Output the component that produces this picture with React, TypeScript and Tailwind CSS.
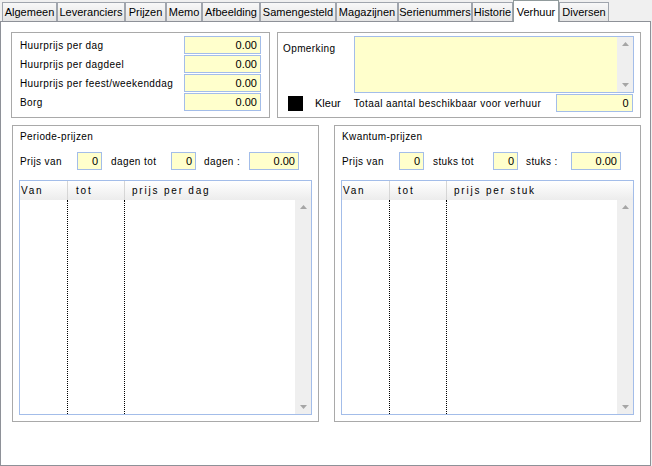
import React from "react";

const tabs = [
  { label: "Algemeen", w: "w-[55px]" },
  { label: "Leveranciers", w: "w-[68px]" },
  { label: "Prijzen", w: "w-[41px]" },
  { label: "Memo", w: "w-[36px]" },
  { label: "Afbeelding", w: "w-[58px]" },
  { label: "Samengesteld", w: "w-[76px]" },
  { label: "Magazijnen", w: "w-[62px]" },
  { label: "Serienummers", w: "w-[74px]" },
  { label: "Historie", w: "w-[41px]" },
  { label: "Verhuur", w: "w-[46px]", active: true },
  { label: "Diversen", w: "w-[50px]" },
];

function Field({ value, className }: { value: string; className: string }) {
  return (
    <div
      className={`h-[18px] border border-[#a3bde9] bg-[#ffffcc] flex items-center justify-end pr-[3px] text-[11px] leading-none tracking-normal text-black ${className}`}
    >
      {value}
    </div>
  );
}

function ScrollBar({ className }: { className: string }) {
  return (
    <div className={`w-[16px] bg-[#efefef] flex flex-col justify-between items-center py-[5px] ${className}`}>
      <svg width="7" height="4" viewBox="0 0 7 4">
        <path d="M3.5 0 L7 4 L0 4 Z" fill="#a6a6a6" />
      </svg>
      <svg width="7" height="4" viewBox="0 0 7 4">
        <path d="M0 0 L7 0 L3.5 4 Z" fill="#a6a6a6" />
      </svg>
    </div>
  );
}

function PriceGroup({
  title,
  unit,
  header,
}: {
  title: string;
  unit: string;
  header: string;
}) {
  return (
    <div className="w-[307px] h-[297px] border border-[#a9a9a9] pl-[6px] pt-[5px] flex flex-col">
      <div className="pl-[1px] leading-[12px]">{title}</div>
      <div className="mt-[9px] flex items-center h-[18px]">
        <span className="w-[58px] pl-[1px]">Prijs van</span>
        <Field value="0" className="w-[25px]" />
        <span className="ml-[9px] w-[60px]">{unit} tot</span>
        <Field value="0" className="w-[25px]" />
        <span className="ml-[8px] w-[45px]">{unit} :</span>
        <Field value="0.00" className="w-[50px]" />
      </div>
      <div className="mt-[10px] w-[293px] h-[235px] border border-[#a3bde9] flex flex-col">
        <div className="h-[19px] flex bg-gradient-to-b from-white to-[#ececec] tracking-[1.8px] leading-[19px]">
          <div className="w-[48px] border-r border-[#d6d6d6] pl-[1px]">Van</div>
          <div className="w-[57px] border-r border-[#d6d6d6] pl-[8px]">tot</div>
          <div className="flex-1 pl-[7px]">{header}</div>
        </div>
        <div className="flex-1 flex">
          <div className="w-[48px] border-r border-dotted border-black" />
          <div className="w-[57px] border-r border-dotted border-black" />
          <div className="flex-1" />
          <ScrollBar className="h-full" />
        </div>
      </div>
    </div>
  );
}

export default function App() {
  return (
    <div className="w-[652px] h-[466px] bg-[#f0f0f0] flex flex-col font-['Liberation_Sans',Arial,sans-serif] text-[10px] tracking-[0.4px] text-black">
      <div className="h-[21px] flex items-end pl-[2px] relative z-10">
        {tabs.map((t) =>
          t.active ? (
            <div
              key={t.label}
              className={`${t.w} h-[22px] -mb-[1px] bg-white border border-b-0 border-[#919b9c] text-[11px] tracking-normal flex items-start justify-center pt-[3px]`}
            >
              {t.label}
            </div>
          ) : (
            <div
              key={t.label}
              className={`${t.w} h-[19px] bg-gradient-to-b from-[#f8f8f8] to-[#e4e4e4] border border-b-0 border-[#a0a5ad] text-[11px] tracking-normal flex items-center justify-center pt-[1px]`}
            >
              {t.label}
            </div>
          )
        )}
      </div>
      <div className="w-[651px] h-[445px] bg-white border border-[#8e9198] pl-[10px] pt-[10px]">
        <div className="flex">
          <div className="w-[259px] h-[86px] border border-[#a9a9a9] pl-[8px] pr-[8px] pt-[3px] flex flex-col gap-[1px]">
            {[
              "Huurprijs per dag",
              "Huurprijs per dagdeel",
              "Huurprijs per feest/weekenddag",
              "Borg",
            ].map((l) => (
              <div key={l} className="flex items-center justify-between h-[18px]">
                <span>{l}</span>
                <Field value="0.00" className="w-[77px]" />
              </div>
            ))}
          </div>
          <div className="ml-[7px] w-[364px] h-[86px] border border-[#a9a9a9] flex flex-col">
            <div className="flex pt-[3px] pl-[5px]">
              <div className="w-[71px] pt-[5px]">Opmerking</div>
              <div className="w-[280px] h-[57px] border border-[#a3bde9] bg-[#ffffcc] flex justify-end">
                <ScrollBar className="h-full" />
              </div>
            </div>
            <div className="flex items-center mt-[1px] h-[18px]">
              <div className="ml-[10px] w-[15px] h-[15px] bg-black" />
              <span className="ml-[12px] text-[11px] tracking-normal">Kleur</span>
              <span className="ml-[13px] w-[202px]">Totaal aantal beschikbaar voor verhuur</span>
              <Field value="0" className="w-[77px]" />
            </div>
          </div>
        </div>
        <div className="flex mt-[7px] ml-[1px] gap-[15px]">
          <PriceGroup title="Periode-prijzen" unit="dagen" header="prijs per dag" />
          <PriceGroup title="Kwantum-prijzen" unit="stuks" header="prijs per stuk" />
        </div>
      </div>
    </div>
  );
}
